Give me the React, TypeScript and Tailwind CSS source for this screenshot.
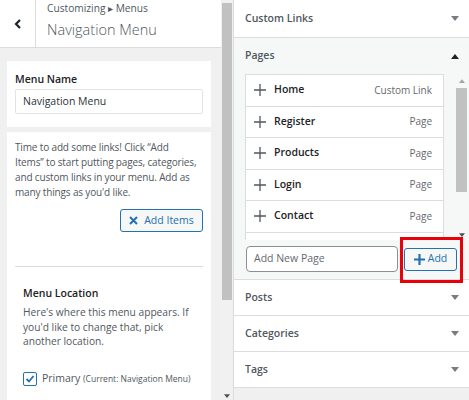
import React from "react";

const Down = ({ className = "" }: { className?: string }) => (
  <svg width="8" height="5" viewBox="0 0 8 5" className={className}>
    <path d="M0 0 H8 L4 5 Z" fill="currentColor" />
  </svg>
);
const Up = ({ className = "" }: { className?: string }) => (
  <svg width="8" height="5" viewBox="0 0 8 5" className={className}>
    <path d="M0 5 H8 L4 0 Z" fill="currentColor" />
  </svg>
);

const Plus = ({ className = "" }: { className?: string }) => (
  <svg width="12" height="12" viewBox="0 0 12 12" className={className}>
    <path d="M6 0 V12 M0 6 H12" stroke="currentColor" strokeWidth="1.3" />
  </svg>
);

const pages: [string, string][] = [
  ["Home", "Custom Link"],
  ["Register", "Page"],
  ["Products", "Page"],
  ["Login", "Page"],
  ["Contact", "Page"],
  ["About", "Page"],
];

function Section({ title, tall = false }: { title: string; tall?: boolean }) {
  return (
    <div
      className={
        (tall ? "h-[38px] " : "h-[36px] ") +
        "shrink-0 bg-white border-b border-[#dcdcde] flex items-center justify-between pl-[11px] pr-[10px]"
      }
    >
      <span className="text-[10.5px] font-semibold text-[#50575e]">{title}</span>
      <Down className="text-[#787c82]" />
    </div>
  );
}

export default function App() {
  return (
    <div className="flex w-[469px] h-[400px] overflow-hidden bg-[#f0f0f1] font-['Open_Sans',sans-serif]">
      {/* Left panel */}
      <div className="w-[221px] shrink-0 flex flex-col">
        <div className="h-[48px] bg-white border-b border-[#dcdcde] flex shrink-0">
          <div className="w-[36px] border-r border-[#dcdcde] flex items-center justify-center">
            <svg width="8" height="10" viewBox="0 0 8 10">
              <path d="M6 1 L2 5 L6 9" stroke="#1d2327" strokeWidth="2.2" fill="none" />
            </svg>
          </div>
          <div className="pl-[11px] pt-[1px] flex flex-col">
            <div className="text-[10.2px] leading-[15px] text-[#50575e]">Customizing ▸ Menus</div>
            <div className="text-[14.5px] font-light leading-[22px] text-[#50575e] mt-[3px]">Navigation Menu</div>
          </div>
        </div>
        <div className="px-[7px] pt-[13px] pr-[10px] flex flex-col gap-[5px]">
          <div className="bg-white px-[8px] pt-[11px] pb-[13px]">
            <div className="text-[10.5px] font-semibold leading-[15px] text-[#1d2327]">Menu Name</div>
            <div className="mt-[2px] h-[25px] border border-[#e3e3e5] rounded-[2px] flex items-center px-[7px] text-[10.5px] text-[#2c3338]">
              Navigation Menu
            </div>
          </div>
          <div className="bg-white px-[8px] pt-[8px] pb-[20px]">
            <p className="w-[184px] text-[10px] tracking-[-0.15px] leading-[15px] text-[#50575e]">
              Time to add some links! Click “Add Items” to start putting pages, categories, and custom links in your menu. Add as many things as you'd like.
            </p>
            <div className="flex justify-end mt-[9px]">
              <div className="h-[23px] w-[83px] border border-[#2271b1] rounded-[3px] bg-[#f6f7f7] flex items-center justify-center gap-[6px] text-[#2271b1]">
                <svg width="9" height="9" viewBox="0 0 9 9">
                  <path d="M1 1 L8 8 M8 1 L1 8" stroke="#2271b1" strokeWidth="2" />
                </svg>
                <span className="text-[10.5px] font-medium">Add Items</span>
              </div>
            </div>
            <div className="mt-[34px] border-t border-[#dcdcde]" />
            <div className="px-[8px] pt-[19px]">
              <div className="text-[10.5px] font-semibold leading-[15px] text-[#1d2327]">Menu Location</div>
              <p className="mt-[4px] text-[10.2px] leading-[14.7px] text-[#50575e]">
                Here's where this menu appears. If you'd like to change that, pick another location.
              </p>
              <div className="mt-[22px] flex items-center gap-[5px]">
                <div className="w-[14px] h-[14px] border border-[#2271b1] rounded-[2px] flex items-center justify-center">
                  <svg width="10" height="10" viewBox="0 0 10 10">
                    <path d="M1.5 5 L4 7.5 L8.5 2" stroke="#2271b1" strokeWidth="1.8" fill="none" />
                  </svg>
                </div>
                <span className="text-[10.5px] text-[#50575e]">
                  Primary <span className="text-[8.5px]">(Current: Navigation Menu)</span>
                </span>
              </div>
            </div>
          </div>
        </div>
      </div>

      {/* Left scrollbar */}
      <div className="w-[11px] shrink-0 bg-[#f1f1f1] flex flex-col items-center pt-[3px] pb-[2px]">
        <div className="w-[10px] h-[297px] bg-[#c1c1c1]" />
        <div className="flex-1" />
        <Down className="text-[#505050] w-[6px] h-[4px]" />
      </div>
      <div className="w-[1px] shrink-0 bg-[#f0f0f1]" />

      {/* Right panel */}
      <div className="flex-1 border-l border-[#dcdcde] flex flex-col">
        <Section title="Custom Links" tall />
        <div className="bg-[#f6f7f7] border-b border-[#dcdcde] relative h-[242px] shrink-0">
          <div className="h-[36px] flex items-center justify-between pl-[11px] pr-[10px]">
            <span className="text-[10.5px] font-semibold text-[#50575e]">Pages</span>
            <Up className="text-[#1d2327]" />
          </div>
          <div className="flex">
            <div className="ml-[11px] w-[199px] h-[166px] overflow-hidden bg-white border border-[#dcdcde] border-b-0">
              {pages.map(([t, k]) => (
                <div key={t} className="h-[31.5px] border-b border-[#dcdcde] flex items-center pl-[8px] pr-[11px]">
                  <Plus className="text-[#50575e]" />
                  <span className="ml-[8px] text-[10.5px] font-semibold text-[#1d2327]">{t}</span>
                  <span className="ml-auto text-[10px] text-[#646970]">{k}</span>
                </div>
              ))}
            </div>
            <div className="ml-[12px] w-[11px] h-[166px] flex flex-col items-center">
              <Up className="text-[#a3a3a3] w-[6px] h-[4px] mt-[5px]" />
              <div className="mt-[5px] w-[11px] h-[104px] bg-[#c1c1c1]" />
              <div className="flex-1" />
              <Down className="text-[#505050] w-[6px] h-[4px] mb-[3px]" />
            </div>
          </div>
          <div className="flex items-center mt-[6px] pl-[12px]">
            <div className="w-[152px] h-[26px] border border-[#8c8f94] rounded-[4px] bg-white flex items-center px-[7px] text-[10.5px] text-[#646970]">
              Add New Page
            </div>
            <div className="ml-[6px] w-[53px] h-[23px] border border-[#2271b1] rounded-[3px] bg-[#f6f7f7] flex items-center justify-center gap-[3px] text-[#2271b1]">
              <svg width="11" height="11" viewBox="0 0 11 11">
                <path d="M5.5 0 V11 M0 5.5 H11" stroke="#2271b1" strokeWidth="2.2" />
              </svg>
              <span className="text-[10.5px] font-medium">Add</span>
            </div>
          </div>
          <div className="absolute left-[166px] top-[199px] w-[63px] h-[46px] border-[3px] border-[#e8000b]" />
        </div>
        <Section title="Posts" />
        <Section title="Categories" />
        <Section title="Tags" />
      </div>
    </div>
  );
}
